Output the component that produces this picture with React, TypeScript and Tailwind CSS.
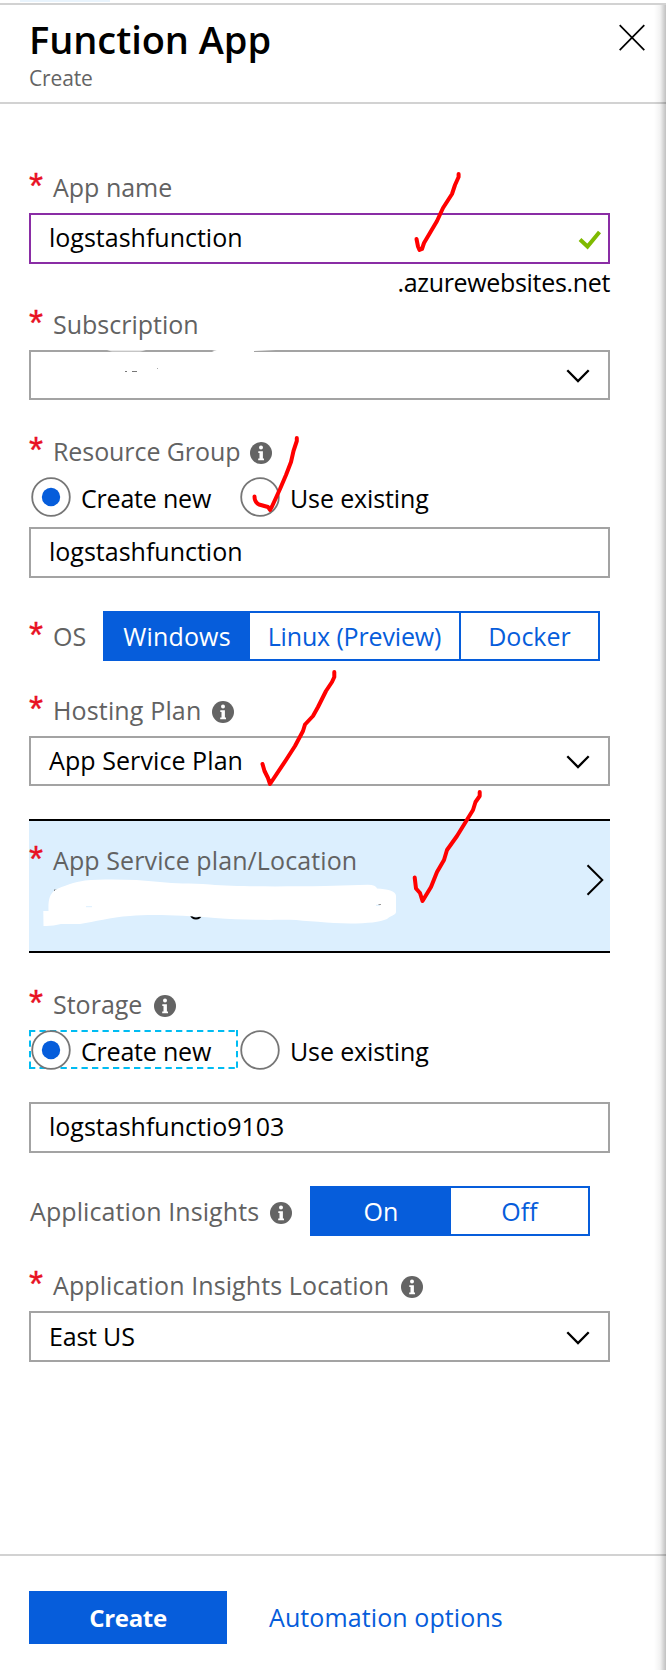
import type { ReactNode } from "react";

function Info({ className = "" }: { className?: string }) {
  return (
    <svg viewBox="0 0 22 22" className={`h-[22px] w-[22px] shrink-0 ${className}`}>
      <circle cx="11" cy="11" r="11" fill="#646464" />
      <circle cx="11" cy="5.6" r="2" fill="#fff" />
      <path d="M8.3 9.3h4.6v7.2h1.1v1.8H8.2v-1.8h1.3v-5.4H8.3z" fill="#fff" />
    </svg>
  );
}

function Label({ text, required = true, info = "", className = "" }: { text: string; required?: boolean; info?: string; className?: string }) {
  return (
    <div className={`flex h-[34px] items-center whitespace-nowrap leading-[34px] text-[#626262] ${className}`}>
      {required && <span className="w-[24px] shrink-0 font-['Liberation_Sans',sans-serif] text-[36px] leading-[34px] tracking-normal text-[#e81123] [-webkit-text-stroke:0.4px_#e81123]">*</span>}
      <span>{text}</span>
      {info && <Info className={`mt-[3px] ${info}`} />}
    </div>
  );
}

function Box({ children, className = "" }: { children?: ReactNode; className?: string }) {
  return (
    <div className={`flex w-[581px] items-center justify-between whitespace-nowrap border-2 pl-[18px] ${className}`}>{children}</div>
  );
}

function Chevron() {
  return (
    <svg viewBox="0 0 26 16" className="mr-[17px] mt-[2px] h-4 w-[26px]" fill="none" stroke="#000" strokeWidth="2.3">
      <path d="M2.3 2.3 13 13 23.7 2.3" />
    </svg>
  );
}

function Radio({ label, checked = false, className = "" }: { label: string; checked?: boolean; className?: string }) {
  return (
    <div className={`flex h-[39px] items-center whitespace-nowrap ${className}`}>
      <svg viewBox="0 0 40 40" className="h-10 w-10 shrink-0">
        <circle cx="20" cy="20" r="18.8" fill="#fff" stroke="#767676" strokeWidth="1.8" />
        {checked && <circle cx="20" cy="20" r="9.2" fill="#065ddb" />}
      </svg>
      <span className="ml-[10px] mt-[2px] leading-[34px]">{label}</span>
    </div>
  );
}

function RadioPair({ focused = false, className = "" }: { focused?: boolean; className?: string }) {
  return (
    <div className={`relative flex h-[39px] ${className}`}>
      {focused && (
        <svg viewBox="0 0 209 39" className="absolute left-0 top-0 h-[39px] w-[209px]" fill="none" stroke="#00bcf2" strokeWidth="2">
          <path d="M0 1H209M0 38H209" strokeDasharray="6.3 4.2" />
          <path d="M1 0V39M208 0V39" strokeDasharray="6.3 4.2" />
        </svg>
      )}
      <Radio label="Create new" checked className="relative w-[209px] pl-[2px] tracking-[-0.2px]" />
      <Radio label="Use existing" className="relative pl-[2px] tracking-[-0.13px]" />
    </div>
  );
}

export default function App() {
  return (
    <div className="relative flex h-[1670px] w-[666px] flex-col overflow-hidden bg-white font-['Open_Sans','Noto_Sans',sans-serif] text-[25px] text-black">
      <div className="h-[3px] pl-5">
        <div className="h-[2px] w-[90px] bg-[#e9f4fd]" />
      </div>
      <header className="flex h-[101px] shrink-0 justify-between border-y-2 border-[#d2d2d2] pl-[29px] pr-[20px]">
        <div>
          <h1 className="mt-[11px] text-[38px] font-semibold leading-[46px] tracking-[-0.05px]">Function App</h1>
          <div className="mt-[2px] text-[21px] leading-[28px] tracking-[-0.15px] text-[#646464]">Create</div>
        </div>
        <svg viewBox="0 0 28 28" className="mt-[19px] h-7 w-7" fill="none" stroke="#000" strokeWidth="1.7">
          <path d="M1.7 1.2 26.3 26.2M26.3 1.2 1.7 26.2" />
        </svg>
      </header>

      <main className="flex flex-1 flex-col pl-[29px]">
        <Label text="App name" className="mt-[66px]" />
        <Box className="mt-[9px] h-[51px] border-[#8a2da5] pb-[1px]">
          <span>logstashfunction</span>
          <svg viewBox="0 0 24 20" className="mr-[6px] mt-[4px] h-5 w-6" fill="none" stroke="#7fba00" strokeWidth="4">
            <path d="M2 9.5 9.5 16.5 21.5 2" />
          </svg>
        </Box>
        <div className="mt-[1px] h-[34px] w-[581px] text-right leading-[34px] tracking-[-0.33px]">.azurewebsites.net</div>

        <Label text="Subscription" className="mt-[8px]" />
        <Box className="mt-[9px] h-[50px] border-[#a3a3a3]">
          <span />
          <Chevron />
        </Box>

        <Label text="Resource Group" info="ml-[10px]" className="mt-[34px] tracking-[-0.08px]" />
        <RadioPair className="mt-[9px]" />
        <Box className="mt-[11px] h-[51px] border-[#a3a3a3] pb-[1px]">logstashfunction</Box>

        <div className="mt-[33px] flex h-[50px] items-center">
          <Label text="OS" className="w-[74px]" />
          <div className="flex h-[50px] border-2 border-[#065ddb] leading-[46px] text-[#065ddb]">
            <div className="w-[145px] bg-[#065ddb] pr-[1px] text-center tracking-[0.15px] text-white">Windows</div>
            <div className="w-[211px] whitespace-nowrap border-r-2 border-[#065ddb] text-center tracking-[-0.15px]">Linux (Preview)</div>
            <div className="w-[137px] text-center">Docker</div>
          </div>
        </div>

        <Label text="Hosting Plan" info="ml-[11px]" className="mt-[32px] tracking-[0.15px]" />
        <Box className="mt-[9px] h-[50px] border-[#a3a3a3]">
          <span className="tracking-[0.08px]">App Service Plan</span>
          <Chevron />
        </Box>

        <div className="mt-[33px] flex h-[134px] w-[581px] justify-between border-y-2 border-black bg-[#dceffe]">
          <Label text="App Service plan/Location" className="mt-[22px] tracking-[0.1px]" />
          <svg viewBox="0 0 18 32" className="mr-[6px] mt-[43px] h-8 w-[18px]" fill="none" stroke="#000" strokeWidth="2">
            <path d="M1.5 1.2 16.3 16 1.5 30.8" />
          </svg>
        </div>

        <Label text="Storage" info="ml-[12px]" className="mt-[34px]" />
        <RadioPair focused className="mt-[9px]" />
        <Box className="mt-[33px] h-[51px] border-[#a3a3a3] pb-[1px]">logstashfunctio9103</Box>

        <div className="mt-[33px] flex h-[50px] items-center">
          <Label text="Application Insights" required={false} info="ml-[11px]" className="w-[281px] pl-[1px] tracking-[0.1px]" />
          <div className="flex h-[50px] border-2 border-[#065ddb] leading-[46px] text-[#065ddb]">
            <div className="w-[139px] bg-[#065ddb] pr-[1px] text-center text-white">On</div>
            <div className="w-[137px] text-center">Off</div>
          </div>
        </div>

        <Label text="Application Insights Location" info="ml-[12px]" className="mt-[32px] tracking-[0.1px]" />
        <Box className="mt-[9px] h-[51px] border-[#a3a3a3]">
          <span className="tracking-[-0.2px]">East US</span>
          <Chevron />
        </Box>
      </main>

      <footer className="flex h-[116px] shrink-0 border-t-2 border-[#d2d2d2] pl-[29px] pt-[35px] leading-[53px]">
        <button className="h-[53px] w-[198px] bg-[#065ddb] text-center text-[24px] font-bold tracking-[-0.3px] text-white">Create</button>
        <a className="ml-[42px] tracking-[0.1px] text-[#065ddb]">Automation options</a>
      </footer>

      <div className="absolute bottom-0 right-0 top-[5px] w-[12px] bg-linear-to-r from-black/0 via-black/5 to-black/25" />

      <svg viewBox="0 0 666 1670" className="pointer-events-none absolute left-0 top-0 h-[1670px] w-[666px]" fill="none">
        <path d="M107 350.5Q126 347 146 350.5L140 351.5H112z" fill="#fff" opacity=".75" />
        <path d="M212 351Q232 346 276 350L254 351V353H216z" fill="#fff" />
        <path d="M125 371.5h2M132 371.5h5" stroke="#777" strokeWidth="1" />
        <path d="M157 368.5h1" stroke="#aaa" strokeWidth="1" />
        <path d="M54 890.5h3" stroke="#000" strokeWidth="1.5" />
        <path d="M191 915C192 919.5 200 919.5 201 915" stroke="#000" strokeWidth="2" />
        <path d="M104 918.5h3" stroke="#333" strokeWidth="1" />
        <path d="M43.3 911H48.5C48 899 50 894 55 890C63 886 75 882 85 880.5C105 878.8 135 879.2 160 882C175 884 190 883 210 884.5C240 887 285 886.5 325 886L368 884.8Q376 885 377 888.5C387 889 396 891 396 896V912C396 915 390 916 387 919C380 922 368 923.5 350 923.5C330 923.5 305 920.5 290 919.8C260 920 240 920 215 918C180 915 150 914 130 916C110 917 95 922 80 924H61Q52 926.5 43.5 926z" fill="#fff" />
        <path d="M86 906.7H92" stroke="#dceffe" strokeWidth="1" />
        <path d="M376 905.3h4" stroke="#dceffe" strokeWidth="1" />
        <path d="M378.5 904.5h2.5" stroke="#999" strokeWidth="1" />
        <g stroke="#f00" strokeWidth="4" strokeLinecap="round" strokeLinejoin="round">
          <path d="M458.6 174V177L455 185L452 194L443 208L437 221L424 243L422 249L419.5 250L418 246.5L416.5 239" />
          <path d="M296.8 438V441L293.5 451L291 462L286 475L280 489L272 506.5L270 510L268 507L259 504.5Q254.5 502 254.5 496.5" />
          <path d="M334.3 672V677L332 682L326 691L318 707L313 716L305 724.5L303 731L295 746L286 760L270 784L268 778L264.5 771L262.5 764" />
          <path d="M479.7 792V796L475.5 802L473 810L465 823L457 836L447 850L444 860L437 872L431 887L422.5 901L420 893L416 888.5L414.7 877.5" />
        </g>
      </svg>
    </div>
  );
}
